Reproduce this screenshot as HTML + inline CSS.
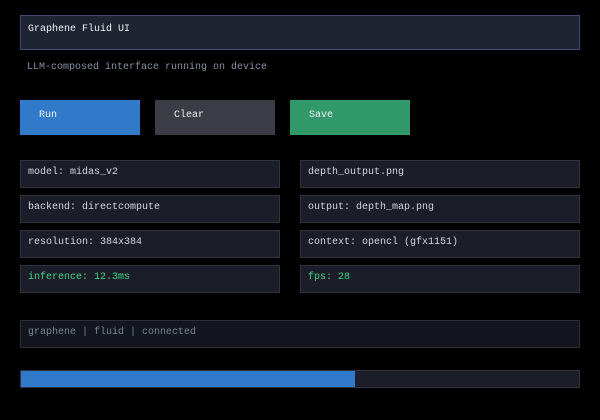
<!DOCTYPE html>
<html><head><style>
*{margin:0;padding:0;box-sizing:border-box}
body{width:600px;height:420px;background:#000;position:relative;overflow:hidden;font-family:"Liberation Mono","DejaVu Sans Mono",monospace;font-size:10px;line-height:11px}
.b{position:absolute;padding-left:7px;white-space:pre}
.i{background:#1b1e29;border:1px solid #2f3340;color:#d3d6de;height:28px;width:260px;padding-top:6px}
.btn{height:35px;width:120px;color:#f0f2f5;padding-left:19px;padding-top:10px}
</style></head><body>
<div class="b" style="left:20px;top:15px;width:560px;height:35px;background:#1f2432;border:1px solid #3d4a78;color:#f0f2f5;padding-top:8px">Graphene Fluid UI</div>
<div class="b" style="left:20px;top:62px;height:14px;color:#8790a6">LLM-composed interface running on device</div>
<div class="b btn" style="left:20px;top:100px;background:#3179c9">Run</div>
<div class="b btn" style="left:155px;top:100px;background:#3c3c46">Clear</div>
<div class="b btn" style="left:290px;top:100px;background:#31986a">Save</div>
<div class="b i" style="left:20px;top:160px">model: midas_v2</div>
<div class="b i" style="left:20px;top:195px">backend: directcompute</div>
<div class="b i" style="left:20px;top:230px">resolution: 384x384</div>
<div class="b i" style="left:20px;top:265px;color:#3fd485">inference: 12.3ms</div>
<div class="b i" style="left:300px;top:160px;width:280px">depth_output.png</div>
<div class="b i" style="left:300px;top:195px;width:280px">output: depth_map.png</div>
<div class="b i" style="left:300px;top:230px;width:280px">context: opencl (gfx1151)</div>
<div class="b i" style="left:300px;top:265px;width:280px;color:#3fd485">fps: 28</div>
<div class="b" style="left:20px;top:320px;width:560px;height:28px;background:#13161e;border:1px solid #2a2e3a;color:#7b8294;padding-top:6px">graphene | fluid | connected</div>
<div style="position:absolute;left:20px;top:370px;width:560px;height:18px;background:#1b1e29;border:1px solid #2f3340">
<div style="width:334px;height:16px;background:#3179c9"></div></div>
</body></html>
